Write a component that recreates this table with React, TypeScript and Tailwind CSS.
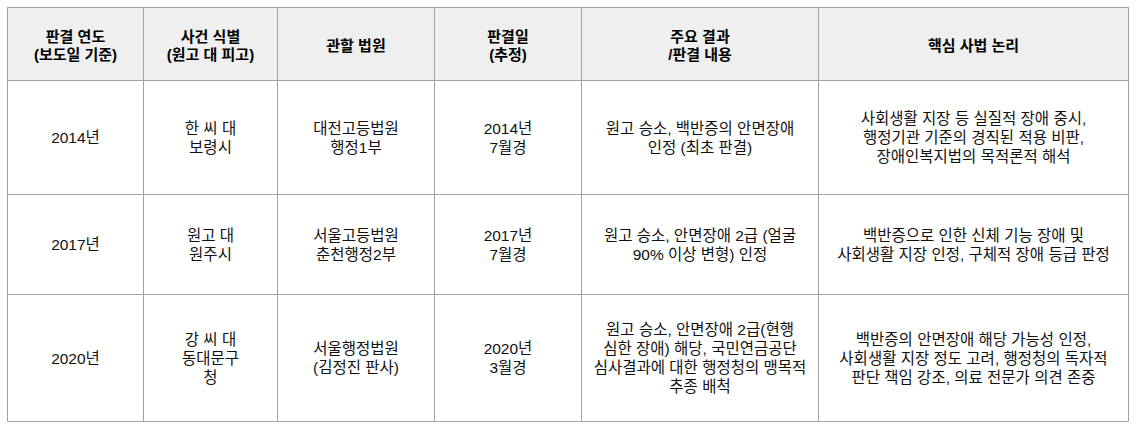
import React from 'react';

type Row = {
    year: string;
    parties: string[];
    court: string[];
    date: string[];
    result: string[];
    logic: string[];
};

const headers: string[][] = [
    ['판결 연도', '(보도일 기준)'],
    ['사건 식별', '(원고 대 피고)'],
    ['관할 법원'],
    ['판결일', '(추정)'],
    ['주요 결과', '/판결 내용'],
    ['핵심 사법 논리'],
];

const rows: Row[] = [
    {
        year: '2014년',
        parties: ['한 씨 대', '보령시'],
        court: ['대전고등법원', '행정1부'],
        date: ['2014년', '7월경'],
        result: ['원고 승소, 백반증의 안면장애', '인정 (최초 판결)'],
        logic: ['사회생활 지장 등 실질적 장애 중시,', '행정기관 기준의 경직된 적용 비판,', '장애인복지법의 목적론적 해석'],
    },
    {
        year: '2017년',
        parties: ['원고 대', '원주시'],
        court: ['서울고등법원', '춘천행정2부'],
        date: ['2017년', '7월경'],
        result: ['원고 승소, 안면장애 2급 (얼굴', '90% 이상 변형) 인정'],
        logic: ['백반증으로 인한 신체 기능 장애 및', '사회생활 지장 인정, 구체적 장애 등급 판정'],
    },
    {
        year: '2020년',
        parties: ['강 씨 대', '동대문구', '청'],
        court: ['서울행정법원', '(김정진 판사)'],
        date: ['2020년', '3월경'],
        result: ['원고 승소, 안면장애 2급(현행', '심한 장애) 해당, 국민연금공단', '심사결과에 대한 행정청의 맹목적', '추종 배척'],
        logic: ['백반증의 안면장애 해당 가능성 인정,', '사회생활 지장 정도 고려, 행정청의 독자적', '판단 책임 강조, 의료 전문가 의견 존중'],
    },
];

const Lines: React.FC<{ lines: string[] }> = ({ lines }) => (
    <>
        {lines.map((l, i) => (
            <span key={i} className="block whitespace-nowrap">{l}</span>
        ))}
    </>
);

const cell = 'bg-white flex flex-col items-center justify-center text-center leading-[19px]';

const App: React.FC = () => {
    return (
        <div className="bg-white w-[1136px] h-[430px] p-[7px] font-['Liberation_Sans','Noto_Sans_CJK_KR',sans-serif] text-[15.5px] text-[#111]">
            <div className="grid grid-cols-[135px_133px_156px_146px_236px_309px] grid-rows-[72px_113px_99px_126px] gap-px p-px bg-[#a3a3a3] w-fit">
                {headers.map((h, i) => (
                    <div key={i} className="bg-[#efefef] flex flex-col items-center justify-center text-center font-bold text-[15px] leading-[18px] pt-[3px] text-[#000]">
                        <Lines lines={h} />
                    </div>
                ))}
                {rows.map((r, ri) => (
                    <React.Fragment key={ri}>
                        <div className={cell}>{r.year}</div>
                        <div className={cell}><Lines lines={r.parties} /></div>
                        <div className={cell}><Lines lines={r.court} /></div>
                        <div className={cell}><Lines lines={r.date} /></div>
                        <div className={cell}><Lines lines={r.result} /></div>
                        <div className={cell}><Lines lines={r.logic} /></div>
                    </React.Fragment>
                ))}
            </div>
        </div>
    );
};

export default App;
